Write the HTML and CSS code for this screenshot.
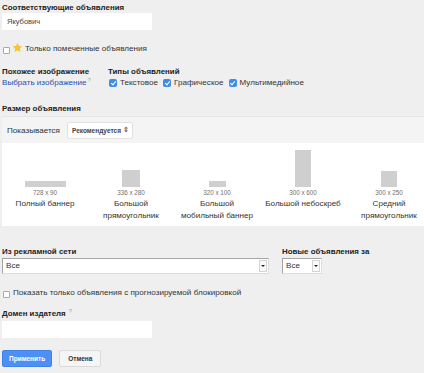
FILE: index.html
```html
<!DOCTYPE html>
<html lang="ru">
<head>
    <meta charset="UTF-8">
    <title>Фильтры объявлений</title>
    <link rel="stylesheet" href="styles.css">
</head>
<body>
    <div class="filters">
        <div class="field">
            <div class="label">Соответствующие объявления</div>
            <div class="text-input">Якубович</div>
        </div>

        <div class="check-row starred">
            <span class="box"></span>
            <svg class="star" width="11" height="11" viewBox="0 0 24 24"><path d="M12 1.5l3.2 7 7.6.8-5.7 5.1 1.6 7.5L12 18l-6.7 3.9 1.6-7.5L1.2 9.3l7.6-.8z" fill="#f7c531"/></svg>
            <span>Только помеченные объявления</span>
        </div>

        <div class="two-col">
            <div class="col-image">
                <div class="label">Похожее изображение</div>
                <a class="link" href="#">Выбрать изображение</a><span class="hint">?</span>
            </div>
            <div class="col-types">
                <div class="label">Типы объявлений</div>
                <div class="types">
                    <span class="check-row"><span class="box checked"></span>Текстовое</span>
                    <span class="check-row"><span class="box checked"></span>Графическое</span>
                    <span class="check-row"><span class="box checked"></span>Мультимедийное</span>
                </div>
            </div>
        </div>

        <div class="label size-label">Размер объявления</div>
        <div class="size-panel">
            <div class="size-toolbar">
                <span>Показывается</span>
                <span class="mini-select">Рекомендуется <span class="updown">&#8661;</span></span>
            </div>
            <div class="size-list">
                <div class="size-item">
                    <div class="preview"><span class="shape" style="width:41px;height:6px"></span></div>
                    <div class="dims">728 x 90</div>
                    <div class="name">Полный баннер</div>
                </div>
                <div class="size-item">
                    <div class="preview"><span class="shape" style="width:18px;height:17px"></span></div>
                    <div class="dims">336 x 280</div>
                    <div class="name">Большой<br>прямоугольник</div>
                </div>
                <div class="size-item">
                    <div class="preview"><span class="shape" style="width:17px;height:6px"></span></div>
                    <div class="dims">320 x 100</div>
                    <div class="name">Большой<br>мобильный баннер</div>
                </div>
                <div class="size-item">
                    <div class="preview"><span class="shape" style="width:16px;height:37px"></span></div>
                    <div class="dims">300 x 600</div>
                    <div class="name">Большой небоскреб</div>
                </div>
                <div class="size-item">
                    <div class="preview"><span class="shape" style="width:16px;height:16px"></span></div>
                    <div class="dims">300 x 250</div>
                    <div class="name">Средний<br>прямоугольник</div>
                </div>
            </div>
        </div>

        <div class="two-col selects">
            <div>
                <div class="label">Из рекламной сети</div>
                <div class="win-select wide">Все<span class="drop"></span></div>
            </div>
            <div>
                <div class="label">Новые объявления за</div>
                <div class="win-select short">Все<span class="drop"></span></div>
            </div>
        </div>

        <div class="check-row blocking">
            <span class="box"></span>
            <span>Показать только объявления с прогнозируемой блокировкой</span>
        </div>

        <div class="field">
            <div class="label">Домен издателя <span class="hint">?</span></div>
            <div class="text-input"></div>
        </div>

        <div class="actions">
            <button class="btn primary">Применить</button>
            <button class="btn">Отмена</button>
        </div>
    </div>
</body>
</html>
```

FILE: styles.css
```css
body {
    margin: 0;
    background-color: #efefef;
    font-family: "Liberation Sans", Arial, sans-serif;
    font-size: 8.1px;
    color: #333;
    overflow: hidden;
}
.filters {
    padding: 3px 0 0 2px;
}
.label {
    font-weight: bold;
    font-size: 7.9px;
    line-height: 10px;
    color: #222;
}
.hint {
    color: #aaa;
    font-size: 6px;
    font-weight: normal;
    vertical-align: 3px;
    margin-left: 1px;
}
.text-input {
    width: 150px;
    height: 17px;
    background-color: white;
    font-size: 7.5px;
    line-height: 17px;
    padding-left: 5px;
    box-sizing: border-box;
    color: #444;
}
.check-row {
    display: flex;
    align-items: center;
    line-height: 10px;
}
.box {
    width: 7px;
    height: 7px;
    border: 1px solid #aaa;
    background-color: white;
    border-radius: 1px;
    box-sizing: border-box;
    margin-right: 3px;
    flex-shrink: 0;
}
.box.checked {
    width: 8px;
    height: 8px;
    border: none;
    border-radius: 2px;
    background-color: #3d8ee8;
    position: relative;
}
.box.checked::after {
    content: "";
    position: absolute;
    left: 2.5px;
    top: 1px;
    width: 2px;
    height: 4px;
    border-right: 1px solid white;
    border-bottom: 1px solid white;
    transform: rotate(40deg);
}
.starred {
    margin-top: 14px;
    padding-left: 1px;
}
.starred .box {
    margin-right: 2px;
    margin-top: 3px;
}
.starred .star {
    margin-right: 2px;
    margin-top: -3px;
}
.two-col {
    display: flex;
    margin-top: 13px;
}
.col-image {
    width: 106px;
}
.link {
    color: #1f4fb4;
    text-decoration: none;
    line-height: 12px;
}
.types {
    display: flex;
    gap: 5px;
    margin-top: 1px;
    padding-left: 1px;
}
.size-label {
    margin-top: 15px;
}
.size-panel {
    margin-top: 2px;
}
.size-toolbar {
    background-color: #f4f4f4;
    border-top: 1px solid #e6e6e6;
    height: 26px;
    display: flex;
    align-items: center;
    padding-left: 5px;
    gap: 7px;
}
.mini-select {
    background-color: white;
    border: 1px solid #e2e2e2;
    border-radius: 2px;
    height: 17px;
    width: 66px;
    box-sizing: border-box;
    font-size: 6.5px;
    font-weight: bold;
    color: #444;
    display: flex;
    align-items: center;
    justify-content: space-between;
    padding: 0 3px 0 4px;
}
.updown {
    font-size: 7px;
    color: #777;
}
.size-list {
    background-color: white;
    display: grid;
    grid-template-columns: repeat(5, 86px);
    padding: 7px 0 3px;
    height: 83px;
    box-sizing: border-box;
}
.size-item {
    display: flex;
    flex-direction: column;
    align-items: center;
    text-align: center;
}
.preview {
    height: 37px;
    display: flex;
    align-items: flex-end;
}
.shape {
    display: block;
    background-color: #cfcfcf;
}
.dims {
    font-size: 6.3px;
    color: #707070;
    line-height: 11px;
}
.name {
    line-height: 12px;
    color: #333;
}
.selects {
    margin-top: 21px;
    gap: 13px;
}
.win-select {
    height: 16px;
    background-color: white;
    border: 1px solid #a5a5a5;
    border-right-color: #ddd;
    border-bottom-color: #ddd;
    box-sizing: border-box;
    display: flex;
    align-items: center;
    justify-content: space-between;
    padding-left: 3px;
    line-height: 14px;
    margin-top: 1px;
}
.win-select.wide {
    width: 267px;
}
.win-select.short {
    width: 40px;
}
.drop {
    width: 8px;
    height: 12px;
    margin-right: 1px;
    border: 1px solid #d4d4d4;
    box-sizing: border-box;
    background-color: #fafafa;
    position: relative;
}
.drop::after {
    content: "";
    position: absolute;
    left: 1px;
    top: 4px;
    border-left: 2px solid transparent;
    border-right: 2px solid transparent;
    border-top: 2px solid #222;
}
.blocking {
    margin-top: 14px;
    padding-left: 1px;
}
.blocking .box {
    margin-top: 2px;
}
.blocking + .field {
    margin-top: 8px;
}
.blocking + .field .text-input {
    margin-top: 2px;
}
.actions {
    display: flex;
    gap: 7px;
    margin-top: 12px;
}
.btn {
    font-family: "Liberation Sans", Arial, sans-serif;
    font-size: 6.5px;
    font-weight: bold;
    height: 17px;
    padding: 0 8px;
    border: 1px solid #dadada;
    border-radius: 2px;
    background-color: #f5f5f5;
    color: #333;
}
.btn.primary {
    background-color: #4d8ff5;
    border-color: #3f82ea;
    color: white;
    padding: 0 6px;
}
```
